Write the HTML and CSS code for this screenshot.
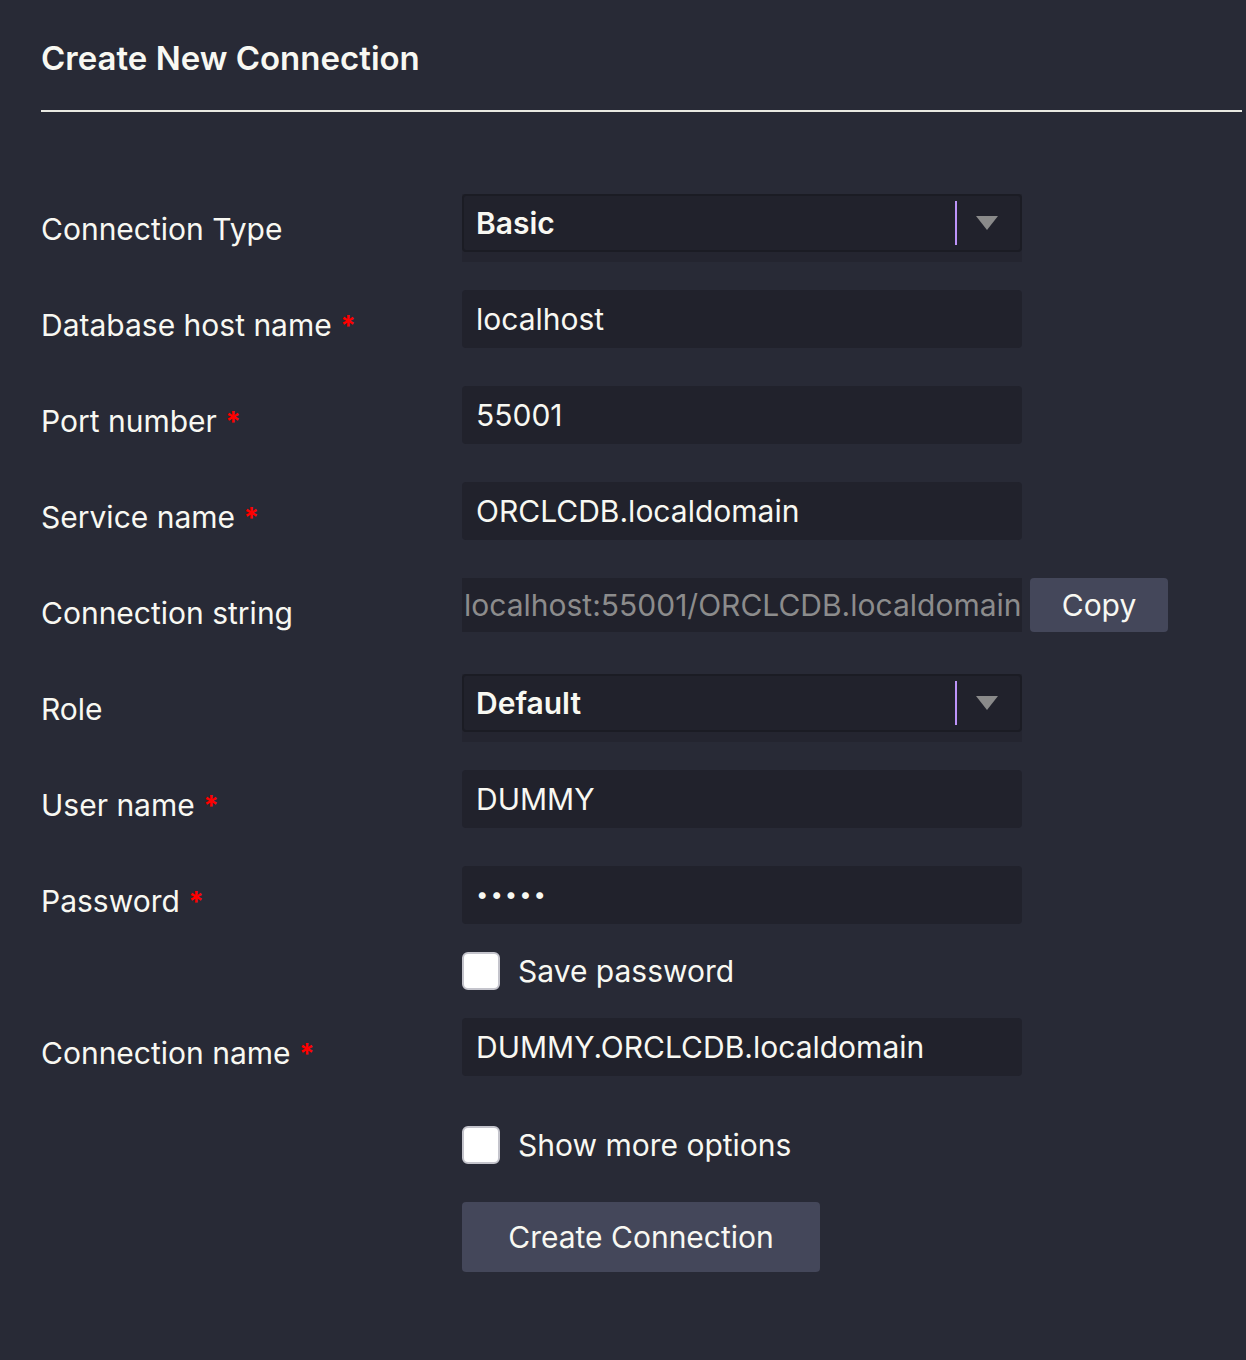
FILE: index.html
```html
<!DOCTYPE html>
<html>
<head>
<meta charset="utf-8">
<link rel="stylesheet" href="styles.css">
</head>
<body>
<div class="page">
  <h2 class="title">Create New Connection</h2>
  <div class="rule"></div>
  <form class="form">
    <div class="row row-select">
      <label class="label">Connection Type</label>
      <div class="select-wrap">
        <div class="select">
          <span class="select-value">Basic</span>
          <span class="select-bar"></span>
          <span class="select-arrow"></span>
        </div>
      </div>
    </div>
    <div class="row">
      <label class="label">Database host name <span class="req">*</span></label>
      <input class="input" type="text" value="localhost">
    </div>
    <div class="row">
      <label class="label">Port number <span class="req">*</span></label>
      <input class="input" type="text" value="55001">
    </div>
    <div class="row">
      <label class="label">Service name <span class="req">*</span></label>
      <input class="input" type="text" value="ORCLCDB.localdomain">
    </div>
    <div class="row row-conn">
      <label class="label">Connection string</label>
      <div class="conn-group">
        <input class="input input-ro" type="text" readonly value="localhost:55001/ORCLCDB.localdomain">
        <button type="button" class="btn btn-copy">Copy</button>
      </div>
    </div>
    <div class="row row-select">
      <label class="label">Role</label>
      <div class="select-wrap">
        <div class="select">
          <span class="select-value">Default</span>
          <span class="select-bar"></span>
          <span class="select-arrow"></span>
        </div>
      </div>
    </div>
    <div class="row">
      <label class="label">User name <span class="req">*</span></label>
      <input class="input" type="text" value="DUMMY">
    </div>
    <div class="row row-pass">
      <label class="label">Password <span class="req">*</span></label>
      <div class="input input-pass">•••••</div>
    </div>
    <div class="row row-check1">
      <span></span>
      <label class="check"><span class="box"></span><span class="check-text">Save password</span></label>
    </div>
    <div class="row row-name">
      <label class="label">Connection name <span class="req">*</span></label>
      <input class="input" type="text" value="DUMMY.ORCLCDB.localdomain">
    </div>
    <div class="row row-check2">
      <span></span>
      <label class="check"><span class="box"></span><span class="check-text">Show more options</span></label>
    </div>
    <div class="row row-btn">
      <span></span>
      <div><button type="button" class="btn btn-create">Create Connection</button></div>
    </div>
  </form>
</div>
</body>
</html>
```
FILE: styles.css
```css
html, body {
  margin: 0;
  padding: 0;
  background: #282a36;
}
body {
  font-family: Inter, "Noto Sans", sans-serif;
  color: #f8f8f2;
  height: 1360px;
}
.page {
  padding: 0 4px 0 41px;
}
.title {
  margin: 0;
  padding-top: 38px;
  font-size: 33px;
  font-weight: 600;
  line-height: 40px;
  height: 72px;
}
.rule {
  height: 2px;
  background: #e9e9e2;
}
.form {
  padding-top: 82px;
}
.row {
  display: grid;
  grid-template-columns: 421px 560px auto;
  align-items: start;
  margin-bottom: 38px;
}
.row-select { margin-bottom: 28px; }
.row-conn { margin-bottom: 42px; }
.row-pass { margin-bottom: 28px; }
.row-check1 { margin-bottom: 28px; }
.row-name { margin-bottom: 50px; }
.row-check2 { margin-bottom: 38px; }
.label {
  font-size: 30px;
  line-height: 36px;
  padding-top: 17px;
  white-space: nowrap;
}
.req {
  color: #ff0000;
  font-weight: 700;
  font-size: 28px;
}
.input {
  box-sizing: border-box;
  width: 560px;
  height: 58px;
  border: none;
  outline: none;
  background: #21222c;
  border-radius: 4px;
  color: #f8f8f2;
  font-family: Inter, "Noto Sans", sans-serif;
  font-size: 30px;
  padding: 0 12px 0 14px;
  margin: 0;
}
.input-pass {
  display: flex;
  align-items: center;
  letter-spacing: 2px;
  font-size: 22px;
  padding-left: 14px;
  padding-bottom: 2px;
}
.conn-group {
  display: flex;
  gap: 8px;
  grid-column: 2 / 4;
}
.input-ro {
  height: 54px;
  color: #8c8c8c;
  padding: 0 0 0 2px;
  border-radius: 0;
}
.btn {
  border: none;
  background: #44475a;
  color: #f8f8f2;
  font-family: Inter, "Noto Sans", sans-serif;
  border-radius: 4px;
  cursor: pointer;
}
.btn-copy {
  width: 138px;
  height: 54px;
  font-size: 30px;
  padding: 0;
}
.btn-create {
  width: 358px;
  height: 70px;
  font-size: 30px;
  padding: 0;
}
.select-wrap {
  height: 68px;
  background: #242530;
}
.select {
  box-sizing: border-box;
  height: 58px;
  border: 2px solid #1b1c24;
  border-radius: 4px;
  background: #21222c;
  display: flex;
  align-items: center;
  padding-left: 12px;
}
.select-value {
  flex: 1;
  font-size: 30px;
  font-weight: 600;
}
.select-bar {
  width: 2px;
  height: 44px;
  background: #bd93f9;
}
.select-arrow {
  width: 0;
  height: 0;
  border-left: 11px solid transparent;
  border-right: 11px solid transparent;
  border-top: 14px solid #8a8a8a;
  margin: 0 22px 0 19px;
}
.check {
  display: flex;
  align-items: center;
  gap: 18px;
  height: 38px;
}
.box {
  box-sizing: border-box;
  width: 38px;
  height: 38px;
  background: #ffffff;
  border: 2px solid #c4c4cc;
  border-radius: 6px;
}
.check-text {
  font-size: 30px;
}
```
